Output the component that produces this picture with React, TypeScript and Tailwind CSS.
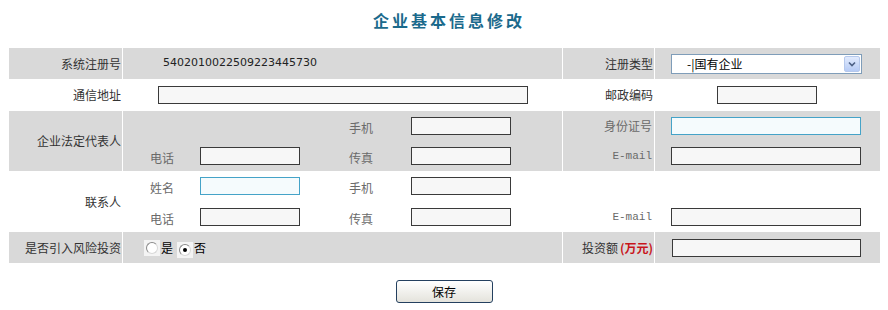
import React from "react";

const cjk = { fontFamily: '"Noto Sans CJK SC", "Liberation Sans", sans-serif' };

const Field = ({ w = "w-[100px]", focus = false }: { w?: string; focus?: boolean }) => (
  <div
    className={`h-[18px] ${w} border ${
      focus ? "border-[#45a3c8] bg-[#f5fbfd]" : "border-[#3a3a3a] bg-[#f7f7f7]"
    }`}
  />
);

const Sub = ({ children }: { children: React.ReactNode }) => (
  <span className="text-[12px] text-[#6a6a6a]">{children}</span>
);

const Mail = () => (
  <span className="text-[11px] text-[#6a6a6a]" style={{ fontFamily: '"Liberation Mono", monospace' }}>
    E-mail
  </span>
);

const Radio = ({ checked }: { checked?: boolean }) => (
  <span className="inline-flex h-[16px] w-[16px] items-center justify-center bg-[#f4f4f4]">
    <span className="flex h-[12px] w-[12px] items-center justify-center rounded-full border border-[#8a8a8a] border-r-[#d8d8d8] border-b-[#d8d8d8] bg-white">
      {checked && <span className="h-[4px] w-[4px] rounded-full bg-black" />}
    </span>
  </span>
);

export default function App() {
  const row = "grid grid-cols-[113px_439px_91px_225px] gap-x-px";
  const gray = "bg-[#d9d9d9]";
  const label = "flex items-center justify-end pr-[1px] text-[12px] text-[#333]";
  const wide = "flex items-center pl-[16px]";

  return (
    <div className="h-[310px] w-[888px] bg-white" style={cjk}>
      <div className="pt-[11px] pl-[10px] text-center text-[16px] font-bold leading-[19px] tracking-[3px] text-[#1b6a8c]">
        企业基本信息修改
      </div>

      <div className="mt-[18px] ml-[9px] w-[871px]">
        {/* 系统注册号 */}
        <div className={`${row} h-[31px]`}>
          <div className={`${gray} ${label}`}>系统注册号</div>
          <div className={`${gray} flex items-center pl-[40px] text-[11px] text-[#222]`} style={{ fontFamily: '"DejaVu Sans", sans-serif' }}>
            5402010022509223445730
          </div>
          <div className={`${gray} ${label}`}>注册类型</div>
          <div className={`${gray} flex items-center pl-[16px]`}>
            <div className="flex h-[20px] w-[191px] items-center justify-between border border-[#7f9db9] bg-white pl-[15px] pr-[1px]">
              <span className="text-[12px] text-black">-|国有企业</span>
              <span className="flex h-[16px] w-[16px] items-center justify-center rounded-[2px] border border-[#b5c8ec] bg-gradient-to-b from-[#e2ebfd] to-[#b6cbf5]">
                <svg width="8" height="6" viewBox="0 0 8 6">
                  <path d="M1 1.5 L4 4.5 L7 1.5" stroke="#4d6185" strokeWidth="1.6" fill="none" />
                </svg>
              </span>
            </div>
          </div>
        </div>

        {/* 通信地址 */}
        <div className={`${row} h-[32px]`}>
          <div className={label}>通信地址</div>
          <div className="flex items-center justify-center">
            <Field w="w-[370px]" />
          </div>
          <div className={label}>邮政编码</div>
          <div className="flex items-center pl-[62px]">
            <Field />
          </div>
        </div>

        {/* 企业法定代表人 */}
        <div className={`${row} h-[60px]`}>
          <div className={`${gray} ${label}`}>企业法定代表人</div>
          <div className={`${gray} grid grid-rows-2`}>
            <div className="flex items-center pl-[27px]">
              <span className="w-[50px]" />
              <span className="w-[100px]" />
              <span className="w-[49px]" />
              <span className="w-[62px]"><Sub>手机</Sub></span>
              <Field />
            </div>
            <div className="flex items-center pl-[27px]">
              <span className="w-[50px]"><Sub>电话</Sub></span>
              <Field />
              <span className="w-[49px]" />
              <span className="w-[62px]"><Sub>传真</Sub></span>
              <Field />
            </div>
          </div>
          <div className={`${gray} grid grid-rows-2`}>
            <div className="flex items-center justify-end pr-[2px]"><Sub>身份证号</Sub></div>
            <div className="flex items-center justify-end pr-[2px]"><Mail /></div>
          </div>
          <div className={`${gray} grid grid-rows-2`}>
            <div className={wide}><Field w="w-[190px]" focus /></div>
            <div className={wide}><Field w="w-[190px]" /></div>
          </div>
        </div>

        {/* 联系人 */}
        <div className={`${row} h-[61px]`}>
          <div className={label}>联系人</div>
          <div className="grid grid-rows-2">
            <div className="flex items-center pl-[27px]">
              <span className="w-[50px]"><Sub>姓名</Sub></span>
              <Field focus />
              <span className="w-[49px]" />
              <span className="w-[62px]"><Sub>手机</Sub></span>
              <Field />
            </div>
            <div className="flex items-center pl-[27px]">
              <span className="w-[50px]"><Sub>电话</Sub></span>
              <Field />
              <span className="w-[49px]" />
              <span className="w-[62px]"><Sub>传真</Sub></span>
              <Field />
            </div>
          </div>
          <div className="grid grid-rows-2">
            <div />
            <div className="flex items-center justify-end pr-[2px]"><Mail /></div>
          </div>
          <div className="grid grid-rows-2">
            <div />
            <div className={wide}><Field w="w-[190px]" /></div>
          </div>
        </div>

        {/* 是否引入风险投资 */}
        <div className={`${row} h-[31px]`}>
          <div className={`${gray} ${label}`}>是否引入风险投资</div>
          <div className={`${gray} flex items-center pl-[21px] text-[12px] text-black`}>
            <Radio />
            <span className="ml-[1px]">是</span>
            <span className="ml-[4px]"><Radio checked /></span>
            <span className="ml-[1px]">否</span>
          </div>
          <div className={`${gray} ${label}`}>
            投资额<span className="ml-[2px] font-bold text-[#c8151b]">(万元)</span>
          </div>
          <div className={`${gray} flex items-center pl-[17px]`}>
            <Field w="w-[189px]" />
          </div>
        </div>
      </div>

      <div className="mt-[17px] flex justify-center">
        <button className="h-[23px] w-[97px] rounded-[3px] border border-[#24405f] bg-gradient-to-b from-white to-[#e4e3dc] text-[12px] text-black">
          保存
        </button>
      </div>
    </div>
  );
}
